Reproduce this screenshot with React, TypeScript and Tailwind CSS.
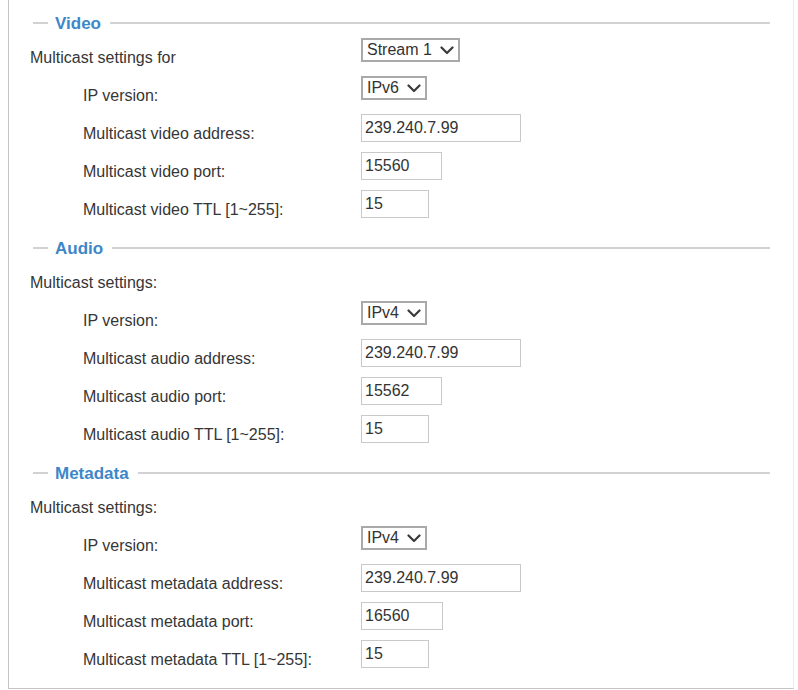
import React from "react";

interface IFieldRow {
  label: string;
  value: string;
  width: string;
}

interface ISection {
  title: string;
  settingsLabel: string;
  streamSelect?: boolean;
  ipVersion: string;
  fields: IFieldRow[];
}

const sections: ISection[] = [
  {
    title: "Video",
    settingsLabel: "Multicast settings for",
    streamSelect: true,
    ipVersion: "IPv6",
    fields: [
      { label: "Multicast video address:", value: "239.240.7.99", width: "w-[160px]" },
      { label: "Multicast video port:", value: "15560", width: "w-[81px]" },
      { label: "Multicast video TTL [1~255]:", value: "15", width: "w-[68px]" },
    ],
  },
  {
    title: "Audio",
    settingsLabel: "Multicast settings:",
    ipVersion: "IPv4",
    fields: [
      { label: "Multicast audio address:", value: "239.240.7.99", width: "w-[160px]" },
      { label: "Multicast audio port:", value: "15562", width: "w-[81px]" },
      { label: "Multicast audio TTL [1~255]:", value: "15", width: "w-[68px]" },
    ],
  },
  {
    title: "Metadata",
    settingsLabel: "Multicast settings:",
    ipVersion: "IPv4",
    fields: [
      { label: "Multicast metadata address:", value: "239.240.7.99", width: "w-[160px]" },
      { label: "Multicast metadata port:", value: "16560", width: "w-[82px]" },
      { label: "Multicast metadata TTL [1~255]:", value: "15", width: "w-[68px]" },
    ],
  },
];

const Chevron = () => (
  <svg width="14" height="9" viewBox="0 0 14 9" fill="none">
    <path d="M1.5 1.5 L7 7 L12.5 1.5" stroke="#3a3a3a" strokeWidth="2.2" strokeLinecap="round" strokeLinejoin="round" />
  </svg>
);

const FakeSelect: React.FC<{ text: string; width: string }> = ({ text, width }) => (
  <div className={`${width} mt-px h-[24px] border-2 border-[#a9a9a9] bg-white flex items-center pl-[4px] pr-[4px] text-[16px] text-[#333] leading-none`}>
    <span>{text}</span>
    <span className="ml-auto flex items-center">
      <Chevron />
    </span>
  </div>
);

const TextBox: React.FC<{ value: string; width: string }> = ({ value, width }) => (
  <input
    type="text"
    defaultValue={value}
    className={`${width} mt-px h-[28px] border border-[#c9c9c9] bg-white pl-[3px] text-[16px] text-[#333] outline-none font-['Liberation_Sans',Arial,sans-serif]`}
  />
);

const Legend: React.FC<{ title: string }> = ({ title }) => (
  <div className="flex items-center h-[24px] pl-[24px] pr-[23px]">
    <div className="w-[15px] h-[2px] bg-[#d2d2d2]" />
    <span className="ml-[7px] text-[17px] font-bold text-[#3d87c8] leading-none">{title}</span>
    <div className="flex-1 ml-[9px] h-[2px] bg-[#d2d2d2]" />
  </div>
);

const Row: React.FC<{ label: string; indent?: boolean; children?: React.ReactNode }> = ({ label, indent, children }) => (
  <div className="flex items-start h-[38px]">
    <div className={`w-[352px] shrink-0 pt-[12px] text-[16px] leading-[18px] text-[#363636] ${indent ? "pl-[74px]" : "pl-[21px]"}`}>
      {label}
    </div>
    {children}
  </div>
);

const Section: React.FC<{ section: ISection }> = ({ section }) => (
  <div className="pb-[9px]">
    <Legend title={section.title} />
    <div className="mt-[2px]">
      <Row label={section.settingsLabel}>
        {section.streamSelect && <FakeSelect text="Stream 1" width="w-[99px]" />}
      </Row>
      <Row label="IP version:" indent>
        <FakeSelect text={section.ipVersion} width="w-[66px]" />
      </Row>
      {section.fields.map((field) => (
        <Row key={field.label} label={field.label} indent>
          <TextBox value={field.value} width={field.width} />
        </Row>
      ))}
    </div>
  </div>
);

export default function App() {
  return (
    <div className="w-[798px] h-[690px] bg-white overflow-hidden font-['Liberation_Sans',Arial,sans-serif]">
      <div className="ml-[8px] w-[786px] h-[689px] border-l border-b border-r border-l-[#c4c4c4] border-b-[#c4c4c4] border-r-[#ededed] pt-[11px]">
        {sections.map((section) => (
          <Section key={section.title} section={section} />
        ))}
      </div>
    </div>
  );
}
